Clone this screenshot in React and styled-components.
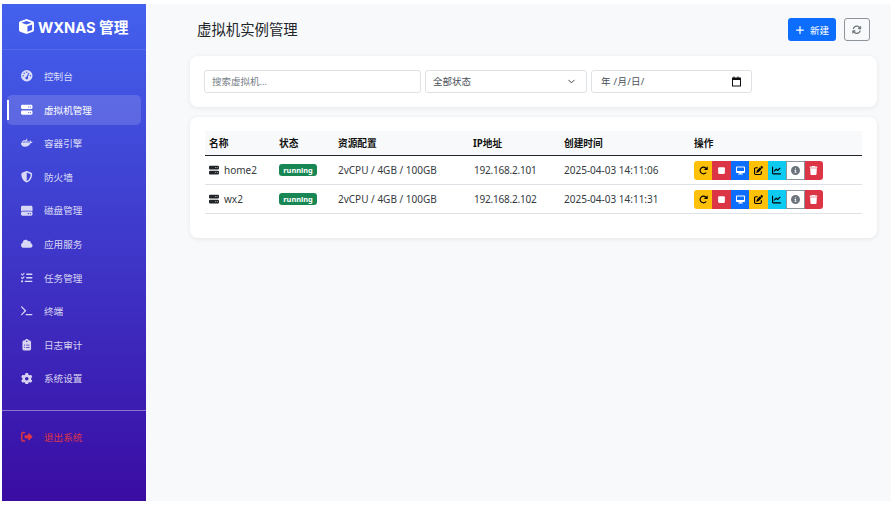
import React from 'react';
import styled, { createGlobalStyle } from 'styled-components';
import {
  FaCube, FaGaugeHigh, FaServer, FaDocker, FaShieldHalved, FaHardDrive, FaCloud, FaListCheck,
  FaTerminal, FaClipboardList, FaGear, FaRightFromBracket, FaPlus, FaArrowsRotate,
  FaArrowRotateRight, FaStop, FaDesktop, FaPenToSquare, FaChartLine, FaCircleInfo, FaTrash,
} from 'react-icons/fa6';
import { FiChevronDown } from 'react-icons/fi';

const GlobalStyle = createGlobalStyle`
  html, body {
    margin: 0;
    padding: 0;
    background: #fff;
  }
  * { box-sizing: border-box; }
  body {
    font-family: "Noto Sans", "Noto Sans CJK SC", sans-serif;
  }
`;

const Page = styled.div`
  display: flex;
  width: 895px;
  height: 506px;
  padding: 4px 4px 5px 2px;
  overflow: hidden;
`;

const Sidebar = styled.aside`
  width: 144px;
  flex-shrink: 0;
  display: flex;
  flex-direction: column;
  color: #fff;
  background: linear-gradient(180deg, #4361ee 0%, #3a0ca3 100%);
`;

const Brand = styled.div`
  height: 46px;
  flex-shrink: 0;
  display: flex;
  align-items: center;
  padding-left: 17px;
  gap: 4px;
  font-family: "Inter", "Noto Sans CJK SC", sans-serif;
  font-size: 14.7px;
  font-weight: 700;
  border-bottom: 1px solid rgba(255, 255, 255, 0.1);
  svg { font-size: 15px; }
`;

const Nav = styled.nav`
  display: flex;
  flex-direction: column;
  padding: 11px 5px 0;
`;

const NavItem = styled.div`
  position: relative;
  height: 30px;
  margin-bottom: 3.6px;
  display: flex;
  align-items: center;
  border-radius: 5px;
  padding-left: 14px;
  font-size: 9.6px;
  color: ${p => (p.$danger ? '#dc3545' : p.$active ? '#fff' : 'rgba(255, 255, 255, 0.8)')};
  background: ${p => (p.$active ? 'rgba(255, 255, 255, 0.15)' : 'transparent')};

  &::before {
    content: '';
    display: ${p => (p.$active ? 'block' : 'none')};
    position: absolute;
    left: 0;
    top: 5px;
    width: 2px;
    height: 20px;
    background: #fff;
  }
`;

const NavIcon = styled.span`
  width: 12px;
  margin-right: 11px;
  display: flex;
  justify-content: flex-start;
  font-size: 11.5px;
  svg { flex-shrink: 0; }
`;

const Divider = styled.div`
  height: 1px;
  margin-top: 13px;
  background: rgba(255, 255, 255, 0.4);
`;

const Logout = styled(Nav)`
  padding-top: 11px;
`;

const Main = styled.main`
  flex: 1;
  min-width: 0;
  background: #f8f9fa;
  padding: 14px 14px 0 44px;
`;

const TopBar = styled.header`
  display: flex;
  align-items: center;
  justify-content: space-between;
  height: 23px;
  margin: 0 7px 15px 7px;
`;

const Title = styled.h1`
  margin: 0;
  padding-bottom: 2px;
  font-size: 14.4px;
  font-weight: 400;
  color: #212529;
`;

const TopActions = styled.div`
  display: flex;
  gap: 8px;
`;

const PrimaryButton = styled.button`
  width: 48px;
  height: 23px;
  display: flex;
  align-items: center;
  justify-content: center;
  gap: 5px;
  padding: 0;
  border: 0;
  border-radius: 3px;
  background: #0d6efd;
  color: #fff;
  font-family: inherit;
  font-size: 9.5px;
  svg { font-size: 10px; }
`;

const OutlineButton = styled.button`
  width: 26px;
  height: 23px;
  display: flex;
  align-items: center;
  justify-content: center;
  padding: 0;
  border: 1px solid #8d949b;
  border-radius: 3px;
  background: transparent;
  color: #6c757d;
  font-size: 9.5px;
`;

const Card = styled.section`
  background: #fff;
  border-radius: 8px;
  box-shadow: 0 1px 5px rgba(0, 0, 0, 0.08);
`;

const FilterCard = styled(Card)`
  height: 51px;
  display: flex;
  align-items: center;
  gap: 4px;
  padding: 0 14px;
  margin-bottom: 10px;
`;

const Field = styled.div`
  height: 23px;
  width: ${p => p.$w}px;
  display: flex;
  align-items: center;
  justify-content: space-between;
  padding: 0 9px 1px 7px;
  border: 1px solid #dee2e6;
  border-radius: 3px;
  background: #fff;
  font-size: 9.5px;
  color: ${p => (p.$muted ? '#757e86' : '#495057')};
`;

const DateText = styled.span`
  margin-left: 2px;
  letter-spacing: 0.3px;
`;

const Chevron = styled(FiChevronDown)`
  font-size: 11px;
  color: #343a40;
`;

const TableCard = styled(Card)`
  height: 121px;
  padding: 14px 15px 0;
`;

const Table = styled.div`
  display: flex;
  flex-direction: column;
`;

const Row = styled.div`
  display: grid;
  grid-template-columns: 70px 59px 135px 91px 130px 1fr;
  align-items: center;
  height: ${p => (p.$head ? '25px' : '29px')};
  padding-left: 4px;
  padding-bottom: ${p => (p.$head ? '1px' : '0')};
  font-size: ${p => (p.$head ? '9.7px' : '10px')};
  font-weight: ${p => (p.$head ? 700 : 400)};
  color: ${p => (p.$head ? '#111' : '#343a40')};
  background: ${p => (p.$head ? '#f8f9fa' : '#fff')};
  border-bottom: 1px solid ${p => (p.$head ? '#212529' : '#dee2e6')};
`;

const NameCell = styled.div`
  display: flex;
  align-items: center;
  gap: 5px;
  svg { font-size: 10px; color: #212529; }
`;

const IpCell = styled.div`
  letter-spacing: -0.2px;
  padding-left: 1px;
`;

const Badge = styled.span`
  width: 38px;
  height: 12px;
  display: flex;
  align-items: center;
  justify-content: center;
  border-radius: 3px;
  background: #198754;
  color: #fff;
  font-size: 7.4px;
  font-weight: 700;
`;

const ButtonGroup = styled.div`
  display: flex;
  width: fit-content;
  border-radius: 3px;
  overflow: hidden;
`;

const ActionButton = styled.span`
  width: 18.43px;
  height: 19px;
  display: flex;
  align-items: center;
  justify-content: center;
  background: ${p => p.$bg};
  color: ${p => p.$fg};
  font-size: 9px;
  border: ${p => (p.$outline ? '1px solid #8d949b' : 'none')};
`;

const navItems = [
  { icon: <FaGaugeHigh />, label: '控制台' },
  { icon: <FaServer />, label: '虚拟机管理', active: true },
  { icon: <FaDocker />, label: '容器引擎' },
  { icon: <FaShieldHalved />, label: '防火墙' },
  { icon: <FaHardDrive />, label: '磁盘管理' },
  { icon: <FaCloud />, label: '应用服务' },
  { icon: <FaListCheck />, label: '任务管理' },
  { icon: <FaTerminal />, label: '终端' },
  { icon: <FaClipboardList />, label: '日志审计' },
  { icon: <FaGear />, label: '系统设置' },
];

const vms = [
  { name: 'home2', ip: '192.168.2.101', created: '2025-04-03 14:11:06' },
  { name: 'wx2', ip: '192.168.2.102', created: '2025-04-03 14:11:31' },
];

const actions = [
  { icon: <FaArrowRotateRight />, bg: '#ffc107', fg: '#000' },
  { icon: <FaStop />, bg: '#dc3545', fg: '#fff' },
  { icon: <FaDesktop />, bg: '#0d6efd', fg: '#fff' },
  { icon: <FaPenToSquare />, bg: '#ffc107', fg: '#000' },
  { icon: <FaChartLine />, bg: '#0dcaf0', fg: '#000' },
  { icon: <FaCircleInfo />, bg: '#fff', fg: '#6c757d', outline: true },
  { icon: <FaTrash />, bg: '#dc3545', fg: '#fff' },
];

function CalendarGlyph() {
  return (
    <svg width="11" height="11" viewBox="0 0 11 11">
      <path d="M1 1.5h1.5V0.5h1v1h3v-1h1v1H10v9H1z M2 4v5.5h7V4z" fill="#111" fillRule="evenodd" />
    </svg>
  );
}

export default function App() {
  return (
    <>
      <GlobalStyle />
      <Page>
        <Sidebar>
          <Brand>
            <FaCube />
            WXNAS 管理
          </Brand>
          <Nav>
            {navItems.map(item => (
              <NavItem key={item.label} $active={item.active}>
                <NavIcon>{item.icon}</NavIcon>
                {item.label}
              </NavItem>
            ))}
          </Nav>
          <Divider />
          <Logout>
            <NavItem $danger>
              <NavIcon><FaRightFromBracket /></NavIcon>
              退出系统
            </NavItem>
          </Logout>
        </Sidebar>
        <Main>
          <TopBar>
            <Title>虚拟机实例管理</Title>
            <TopActions>
              <PrimaryButton><FaPlus />新建</PrimaryButton>
              <OutlineButton><FaArrowsRotate /></OutlineButton>
            </TopActions>
          </TopBar>
          <FilterCard>
            <Field $w={217} $muted>搜索虚拟机...</Field>
            <Field $w={162}>全部状态<Chevron /></Field>
            <Field $w={161}><DateText>年 /月/日/</DateText><CalendarGlyph /></Field>
          </FilterCard>
          <TableCard>
            <Table>
              <Row $head>
                <div>名称</div>
                <div>状态</div>
                <div>资源配置</div>
                <div>IP地址</div>
                <div>创建时间</div>
                <div>操作</div>
              </Row>
              {vms.map(vm => (
                <Row key={vm.name}>
                  <NameCell><FaServer />{vm.name}</NameCell>
                  <div><Badge>running</Badge></div>
                  <div>2vCPU / 4GB / 100GB</div>
                  <IpCell>{vm.ip}</IpCell>
                  <div>{vm.created}</div>
                  <ButtonGroup>
                    {actions.map((a, i) => (
                      <ActionButton key={i} $bg={a.bg} $fg={a.fg} $outline={a.outline}>
                        {a.icon}
                      </ActionButton>
                    ))}
                  </ButtonGroup>
                </Row>
              ))}
            </Table>
          </TableCard>
        </Main>
      </Page>
    </>
  );
}
